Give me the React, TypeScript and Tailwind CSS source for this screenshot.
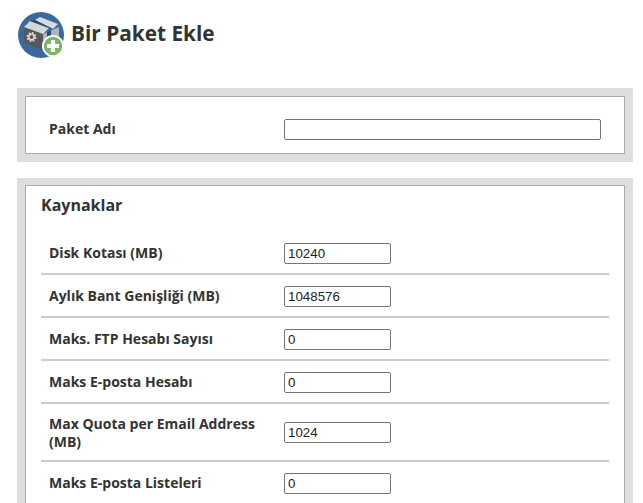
import React from 'react';

const resources = [
  { label: 'Disk Kotası (MB)', value: '10240' },
  { label: 'Aylık Bant Genişliği (MB)', value: '1048576' },
  { label: 'Maks. FTP Hesabı Sayısı', value: '0' },
  { label: 'Maks E-posta Hesabı', value: '0' },
  { label: 'Max Quota per Email Address (MB)', value: '1024', wraps: true },
  { label: 'Maks E-posta Listeleri', value: '0' },
];

const PackageIcon = () => (
  <svg width="47" height="47" viewBox="0 0 47 47" className="shrink-0">
    <circle cx="23" cy="23" r="23" fill="#3a6a9c" />
    {/* box sides */}
    <path d="M6 15 L25 22 L25 38 L6 31 Z" fill="#58585a" />
    <path d="M25 22 L41 15 L41 30 L25 38 Z" fill="#aeb4bb" />
    <path d="M29 20 L33 18 L33 34 L29 36 Z" fill="#2a4d75" />
    {/* lids */}
    <path d="M6 15 L12 9 L31 16 L25 22 Z" fill="#d3d6da" />
    <path d="M17 8 L22 5 L40 12 L35 17 Z" fill="#d9dbde" />
    <path d="M12 9 L17 8 L35 17 L31 16 Z" fill="#2a4d75" />
    {/* gear */}
    <circle cx="13.5" cy="25" r="3.6" fill="none" stroke="#dcdcdc" strokeWidth="2.6" strokeDasharray="1.7 1.1" />
    <circle cx="13.5" cy="25" r="2.6" fill="none" stroke="#dcdcdc" strokeWidth="1.4" />
    {/* plus badge */}
    <circle cx="35" cy="34" r="11" fill="#fff" />
    <circle cx="35" cy="34" r="9.2" fill="#7cb564" />
    <path d="M35 28 V40 M29 34 H41" stroke="#fff" strokeWidth="4.2" />
  </svg>
);

const TextBox = ({ value, className }: { value: string; className: string }) => (
  <input
    type="text"
    defaultValue={value}
    className={`h-[21px] shrink-0 rounded-[2px] border border-[#767676] bg-white px-[3px] font-['Liberation_Sans',sans-serif] text-[13.33px] text-[#222] outline-none ${className}`}
  />
);

const App = () => {
  return (
    <div className="h-[503px] w-[643px] overflow-hidden bg-white font-['Open_Sans',sans-serif] text-[#333]">
      <div className="flex items-center gap-[6px] pl-[18px] pt-[12px]">
        <PackageIcon />
        <h1 className="mb-[5px] text-[20.8px] font-bold leading-[28px] text-[#333]">Bir Paket Ekle</h1>
      </div>

      <div className="ml-[17px] mt-[29px] w-[616px] bg-[#dedede] p-[8px]">
        <div className="flex h-[58px] items-center border border-[#aaaaaa] bg-white pl-[23px] pt-[9px]">
          <label className="mb-[2px] w-[235px] shrink-0 text-[14px] font-bold leading-[18px]">Paket Adı</label>
          <TextBox value="" className="w-[317px]" />
        </div>
      </div>

      <div className="ml-[17px] mt-[16px] w-[616px] bg-[#dedede] px-[8px] pt-[7px]">
        <div className="border border-[#aaaaaa] bg-white px-[15px] pb-[20px]">
          <h2 className="pb-[16px] pt-[8px] text-[16px] font-bold leading-[22px]">Kaynaklar</h2>
          {resources.map((row) => (
            <div key={row.label} className="flex min-h-[43px] items-center border-b-2 border-[#cccccc] pb-[9px] pl-[8px] pt-[11px]">
              <label className={`w-[235px] shrink-0 pr-[20px] text-[14px] font-bold leading-[18px] ${row.wraps ? '' : 'mb-[2px]'}`}>{row.label}</label>
              <TextBox value={row.value} className={`w-[107px] ${row.wraps ? 'mb-[1px]' : ''}`} />
            </div>
          ))}
        </div>
      </div>
    </div>
  );
};

export default App;
